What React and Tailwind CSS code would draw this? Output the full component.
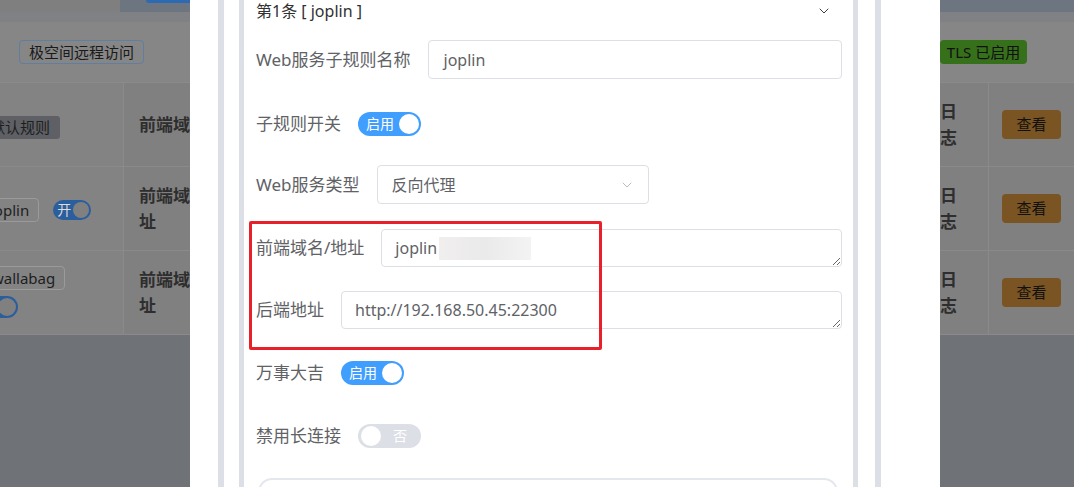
import React from 'react';
import { ChevronDown } from 'lucide-react';

const font = { fontFamily: '"Noto Sans", "Noto Sans CJK SC", sans-serif' };

const Switch = ({ on, text }) => (
  <div
    className={`relative flex h-[24px] w-[63px] shrink-0 items-center rounded-full ${
      on ? 'bg-[#409eff]' : 'bg-[#dcdfe6]'
    }`}
  >
    {on ? (
      <>
        <span className="pl-[8px] text-[14px] leading-none text-white">{text}</span>
        <span className="absolute right-[2px] top-[2px] h-[20px] w-[20px] rounded-full bg-white" />
      </>
    ) : (
      <>
        <span className="absolute left-[3px] top-[2px] h-[20px] w-[20px] rounded-full bg-white" />
        <span className="ml-auto pr-[14px] text-[14px] leading-none text-white">{text}</span>
      </>
    )}
  </div>
);

const Label = ({ children }) => (
  <span className="mr-[17px] shrink-0 whitespace-nowrap text-[17px] text-[#606266]">{children}</span>
);

const Area = ({ value, blur }) => (
  <div className="relative flex-1">
    <textarea
      readOnly
      value={value}
      rows={1}
      className="block h-[38px] w-full resize-y overflow-hidden rounded-[4px] border border-[#dcdfe6] bg-white px-[13px] py-[6px] text-[16px] leading-[24px] text-[#606266] outline-none"
      style={font}
    />
    {blur && (
      <span className="absolute left-[58px] top-[8px] h-[23px] w-[92px] bg-gradient-to-r from-[#f1eeee] via-[#eaeaea] to-[#f3f3f3]" />
    )}
  </div>
);

const TableRow = ({ first, children }) => (
  <div className="flex h-[84px] border-b border-[#8a8a8a]">
    <div className="relative w-[124px] shrink-0 overflow-hidden border-r border-[#8a8a8a] bg-[#838383]">
      {first}
    </div>
    <div className="flex flex-1 items-center pl-[15px] text-[17px] font-bold leading-[26px] text-[#2e2e2e]">
      {children}
    </div>
    <div className="flex w-[63px] items-center pl-[15px] text-[17px] font-bold leading-[26px] text-[#2e2e2e]">
      <span className="w-[18px] break-all">日志</span>
    </div>
    <div className="flex w-[86px] items-center border-l border-[#8a8a8a] pl-[13px]">
      <span className="flex h-[29px] w-[59px] items-center justify-center rounded-[4px] bg-[#7a5422] text-[15px] text-[#111]">
        查看
      </span>
    </div>
  </div>
);

export default function App() {
  return (
    <div className="relative h-[487px] w-[1074px] overflow-hidden bg-[#6f7378]" style={font}>
      {/* page behind the dialog */}
      <div className="flex h-[12px]">
        <div className="w-[120px] bg-[#7f7f7f]" />
        <div className="flex-1 bg-[#6c7580]">
          <div className="ml-[26px] h-[3px] w-[60px] rounded-b-[3px] bg-[#2c6bb3]" />
        </div>
      </div>
      <div className="h-[10px] bg-[#7f8184]" />
      <div className="flex h-[61px] items-center border-b border-[#8a8a8a] bg-[#868686] pl-[19px] pr-[47px]">
        <span className="flex h-[24px] items-center rounded-[4px] border border-[#5f7ea0] px-[9px] text-[15px] text-[#1a1a1a]">
          极空间远程访问
        </span>
        <span className="ml-auto flex h-[24px] w-[87px] items-center justify-center rounded-[4px] bg-[#36701b] text-[15px] text-[#111]">
          TLS 已启用
        </span>
      </div>
      <div className="bg-[#808080]">
        <TableRow
          first={
            <span className="absolute left-[-20px] top-[33px] flex h-[23px] items-center rounded-[3px] bg-[#5e6065] pl-[10px] pr-[10px] text-[15px] text-[#1e1e1e]">
              默认规则
            </span>
          }
        >
          前端域名
        </TableRow>
        <TableRow
          first={
            <div className="absolute left-[-20px] top-[31px] flex items-center">
              <span className="flex h-[24px] items-center rounded-[4px] border border-[#9a9a9a] px-[9px] text-[15px] text-[#1e1e1e]">
                joplin
              </span>
              <span className="relative ml-[14px] flex h-[20px] w-[38px] items-center rounded-full bg-[#2b5e9c]">
                <span className="pl-[4px] text-[14px] leading-none text-[#dcdcdc]">开</span>
                <span className="absolute right-[2px] top-[2px] h-[16px] w-[16px] rounded-full bg-[#808080]" />
              </span>
            </div>
          }
        >
          <span className="w-[52px] break-all">前端域址</span>
        </TableRow>
        <TableRow
          first={
            <div className="absolute left-[-18px] top-[15px]">
              <span className="flex h-[24px] items-center rounded-[4px] border border-[#9a9a9a] px-[9px] text-[15px] text-[#1e1e1e]">
                wallabag
              </span>
              <span className="relative ml-[-4px] mt-[6px] block h-[22px] w-[40px] rounded-full bg-[#2b5e9c]">
                <span className="absolute right-[2px] top-[2px] h-[18px] w-[18px] rounded-full bg-[#808080]" />
              </span>
            </div>
          }
        >
          <span className="w-[52px] break-all">前端域址</span>
        </TableRow>
      </div>

      {/* dialog */}
      <div className="absolute left-[190px] top-0 h-[487px] w-[750px] bg-white pl-[28px]">
        <div className="h-full w-[663px] border-x-[6px] border-[#dcdfe6] pl-[15px] pr-[17px]">
          <div className="h-full border-x-[5px] border-[#dcdfe6] pl-[12px] pr-[11px]">
            <div className="flex h-[22px] items-center justify-between text-[16px] text-[#303133]">
              <span>第1条 [ joplin ]</span>
              <ChevronDown size={16} strokeWidth={1.4} className="mr-[10px] text-[#303133]" />
            </div>
            <div className="mt-[18px] flex h-[39px] items-center">
              <Label>Web服务子规则名称</Label>
              <div className="flex h-[39px] flex-1 items-center rounded-[4px] border border-[#dcdfe6] px-[15px] text-[16px] text-[#606266]">
                joplin
              </div>
            </div>
            <div className="mt-[25px] flex h-[39px] items-center">
              <Label>子规则开关</Label>
              <Switch on text="启用" />
            </div>
            <div className="mt-[22px] flex h-[39px] items-center">
              <Label>Web服务类型</Label>
              <div className="flex h-[39px] w-[272px] items-center justify-between rounded-[4px] border border-[#dcdfe6] pl-[14px] pr-[13px] text-[16px] text-[#606266]">
                <span>反向代理</span>
                <ChevronDown size={16} strokeWidth={1.2} className="text-[#a8abb2]" />
              </div>
            </div>
            <div className="mt-[25px] flex h-[38px] items-center">
              <Label>前端域名/地址</Label>
              <Area value="joplin" blur />
            </div>
            <div className="mt-[24px] flex h-[38px] items-center">
              <Label>后端地址</Label>
              <Area value="http://192.168.50.45:22300" />
            </div>
            <div className="mt-[24px] flex h-[39px] items-center">
              <Label>万事大吉</Label>
              <Switch on text="启用" />
            </div>
            <div className="mt-[24px] flex h-[39px] items-center">
              <Label>禁用长连接</Label>
              <Switch text="否" />
            </div>
            <div className="ml-[2px] mr-[4px] mt-[23px] h-[40px] rounded-[14px] border-2 border-[#e4e7ed]" />
          </div>
        </div>
        <div className="absolute left-[59px] top-[221px] h-[129px] w-[353px] rounded-[2px] border-[3px] border-[#e8202a]" />
      </div>
    </div>
  );
}
